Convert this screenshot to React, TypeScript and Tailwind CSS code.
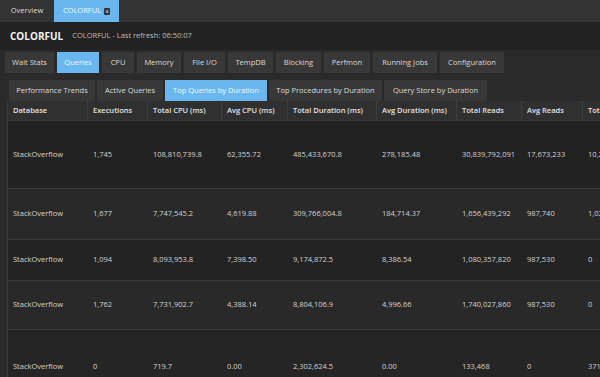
import React from 'react';

const mainTabs = [
  { name: 'Wait Stats', w: 'w-[49px]' },
  { name: 'Queries', w: 'w-[42px]', active: true },
  { name: 'CPU', w: 'w-[32px]' },
  { name: 'Memory', w: 'w-[44px]' },
  { name: 'File I/O', w: 'w-[41px]' },
  { name: 'TempDB', w: 'w-[45px]' },
  { name: 'Blocking', w: 'w-[45px]' },
  { name: 'Perfmon', w: 'w-[46px]' },
  { name: 'Running Jobs', w: 'w-[64px]' },
  { name: 'Configuration', w: 'w-[64px]' },
];

const subTabs = [
  { name: 'Performance Trends', w: 'w-[86px]' },
  { name: 'Active Queries', w: 'w-[66px]' },
  { name: 'Top Queries by Duration', w: 'w-[102px]', active: true },
  { name: 'Top Procedures by Duration', w: 'w-[113px]' },
  { name: 'Query Store by Duration', w: 'w-[103px]' },
];

const columns = [
  { name: 'Database', w: 'w-[80px]' },
  { name: 'Executions', w: 'w-[60px]' },
  { name: 'Total CPU (ms)', w: 'w-[74px]' },
  { name: 'Avg CPU (ms)', w: 'w-[66px]' },
  { name: 'Total Duration (ms)', w: 'w-[89px]' },
  { name: 'Avg Duration (ms)', w: 'w-[80px]' },
  { name: 'Total Reads', w: 'w-[65px]' },
  { name: 'Avg Reads', w: 'w-[61px]' },
  { name: 'Total Writes', w: 'w-[80px]' },
];

const rows = [
  { h: 'h-[68px]', bg: 'bg-[#222222]', cells: ['StackOverflow', '1,745', '108,810,739.8', '62,355.72', '485,433,670.8', '278,185.48', '30,839,792,091', '17,673,233', '10,245,118'] },
  { h: 'h-[51px]', bg: 'bg-[#292929]', cells: ['StackOverflow', '1,677', '7,747,545.2', '4,619.88', '309,766,004.8', '184,714.37', '1,656,439,292', '987,740', '1,024,552'] },
  { h: 'h-[41px]', bg: 'bg-[#232323]', cells: ['StackOverflow', '1,094', '8,093,953.8', '7,398.50', '9,174,872.5', '8,386.54', '1,080,357,820', '987,530', '0'] },
  { h: 'h-[49px]', bg: 'bg-[#292929]', cells: ['StackOverflow', '1,762', '7,731,902.7', '4,388.14', '8,804,106.9', '4,996.66', '1,740,027,860', '987,530', '0'] },
  { h: 'h-[74px]', bg: 'bg-[#252525]', cells: ['StackOverflow', '0', '719.7', '0.00', '2,302,624.5', '0.00', '133,468', '0', '371'] },
];

export default function App() {
  return (
    <div className="w-[600px] h-[377px] overflow-hidden bg-[#2a2a2a] font-['Segoe_UI','Open_Sans',sans-serif] text-[#d6d6d6]">
      {/* server tabs */}
      <div className="flex h-[22px] bg-[#333333]">
        <div className="w-[54px] flex items-center justify-center text-[7.5px] text-[#dcdcdc]">Overview</div>
        <div className="w-[65px] flex items-center justify-center gap-[3px] bg-[#6ab7f0] text-[7.5px] text-[#f4f8fc]">
          <span>COLORFUL</span>
          <span className="w-[6px] h-[7px] rounded-[1px] bg-[#2b3540] text-[6px] leading-[6px] text-center text-white">x</span>
        </div>
      </div>

      {/* header */}
      <div className="h-[28px] bg-[#222222] flex items-center pl-[10px] gap-[9px]">
        <span className="text-[10px] font-bold text-[#f2f2f2]">COLORFUL</span>
        <span className="text-[7.5px] text-[#bdbdbd]">COLORFUL - Last refresh: 06:50:07</span>
      </div>

      {/* main tabs */}
      <div className="flex gap-[3px] pl-[5px] pt-[2px]">
        {mainTabs.map((t) => (
          <div
            key={t.name}
            className={`${t.w} h-[21px] flex items-center justify-center whitespace-nowrap text-[7.5px] ${t.active ? 'bg-[#6ab7f0] text-[#f4f8fc]' : 'bg-[#383838] text-[#d8d8d8]'}`}
          >
            {t.name}
          </div>
        ))}
      </div>

      {/* sub tabs */}
      <div className="flex gap-[2px] pl-[9px] pt-[7px]">
        {subTabs.map((t) => (
          <div
            key={t.name}
            className={`${t.w} h-[21px] flex items-center justify-center whitespace-nowrap text-[7.5px] ${t.active ? 'bg-[#6ab7f0] text-[#f4f8fc]' : 'bg-[#383838] text-[#d8d8d8]'}`}
          >
            {t.name}
          </div>
        ))}
      </div>

      {/* grid */}
      <div className="ml-[7px] border-l border-[#3c3c3c]">
        <div className="flex h-[20px] bg-[#303030] border-b border-[#3a3a3a]">
          {columns.map((c) => (
            <div
              key={c.name}
              className={`${c.w} shrink-0 flex items-center pl-[5px] border-r border-[#3e3e3e] text-[7.5px] font-semibold text-[#e2e2e2] whitespace-nowrap overflow-hidden`}
            >
              {c.name}
            </div>
          ))}
        </div>
        {rows.map((r, i) => (
          <div key={i} className={`flex ${r.h} ${r.bg} border-b border-[#3a3a3a]`}>
            {r.cells.map((v, j) => (
              <div
                key={j}
                className={`${columns[j].w} shrink-0 flex items-center pl-[5px] text-[7.5px] text-[#d2d2d2] whitespace-nowrap overflow-hidden`}
              >
                {v}
              </div>
            ))}
          </div>
        ))}
      </div>
    </div>
  );
}
